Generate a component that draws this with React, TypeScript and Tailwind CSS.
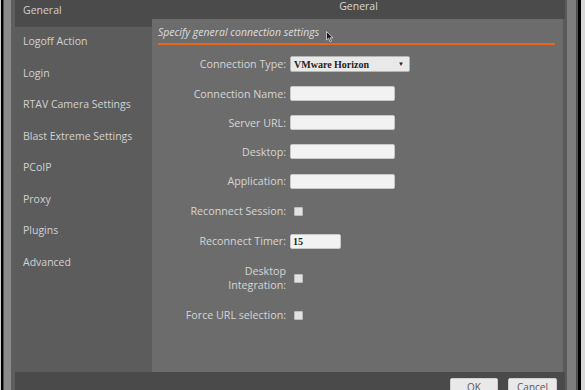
import React from "react";

const sidebarItems = [
  "General",
  "Logoff Action",
  "Login",
  "RTAV Camera Settings",
  "Blast Extreme Settings",
  "PCoIP",
  "Proxy",
  "Plugins",
  "Advanced",
];

function Label({ children }: { children: React.ReactNode }) {
  return (
    <div className="w-[134px] shrink-0 text-right text-[10.7px] leading-[14px] text-[#d6d6d6]">
      {children}
    </div>
  );
}

function TextBox({ w, value }: { w: string; value?: string }) {
  return (
    <div
      className={`${w} h-[15px] bg-[#f2f2f2] border border-[#c8c8c8] rounded-[2px] flex items-center pl-[2px] text-[10px] font-bold text-[#222]`}
      style={{ fontFamily: '"Liberation Serif", serif' }}
    >
      {value}
    </div>
  );
}

function Check() {
  return <div className="ml-[4px] w-[9px] h-[9px] bg-[#e2e2e2] rounded-[1px] border border-[#bdbdbd]" />;
}

export default function App() {
  return (
    <div
      className="w-[585px] h-[390px] flex overflow-hidden bg-[#888]"
      style={{ fontFamily: '"Open Sans", sans-serif' }}
    >
      {/* left frame */}
      <div className="w-[1px] bg-[#cfcfcf]" />
      <div className="w-[2px] bg-black" />
      <div className="w-[1px] bg-[#4e4e4e]" />
      <div className="w-[7px] bg-[#8a8a8a]" />
      <div className="w-[4px] bg-[#5e5e5e]" />

      {/* main */}
      <div className="w-[550px] flex flex-col">
        <div className="flex flex-1 min-h-0">
          {/* sidebar */}
          <div className="w-[137px] bg-[#5c5c5c] overflow-hidden">
            <div className="-mt-[5px]">
              {sidebarItems.map((it, i) => (
                <div
                  key={it}
                  className={`h-[31.5px] flex items-center pl-[8px] text-[10.5px] text-[#d2d2d2] ${
                    i === 0 ? "bg-[#4b4b4b]" : ""
                  }`}
                >
                  {it}
                </div>
              ))}
            </div>
          </div>

          {/* right column */}
          <div className="flex-1 flex flex-col">
            <div className="h-[19px] bg-[#4b4b4b] flex items-center justify-center text-[10.5px] text-[#d8d8d8] pb-[6px]">
              General
            </div>
            <div className="relative flex-1 bg-[#6c6c6c] border-r-2 border-[#5a5a5a] flex flex-col">
              <div className="h-[24px] pl-[6px] pt-[6px] text-[10.5px] italic text-[#dedede] leading-[14px]">
                Specify general connection settings
              </div>
              <div className="ml-[6px] mr-[8px] h-[2px] bg-[#e8671c]" />
              <div className="mt-[4px] flex flex-col">
                <div className="h-[30px] flex items-center gap-[4px]">
                  <Label>Connection Type:</Label>
                  <div className="w-[120px] h-[16px] bg-[#e9e9e9] border border-[#b5b5b5] rounded-[2px] flex items-center justify-between pl-[3px] pr-[5px]">
                    <span
                      className="text-[10px] font-bold text-[#1e1e1e]"
                      style={{ fontFamily: '"Liberation Serif", serif' }}
                    >
                      VMware Horizon
                    </span>
                    <span className="text-[6px] text-[#222]">▼</span>
                  </div>
                </div>
                <div className="h-[29px] flex items-center gap-[4px]">
                  <Label>Connection Name:</Label>
                  <TextBox w="w-[105px]" />
                </div>
                <div className="h-[29px] flex items-center gap-[4px]">
                  <Label>Server URL:</Label>
                  <TextBox w="w-[105px]" />
                </div>
                <div className="h-[29px] flex items-center gap-[4px]">
                  <Label>Desktop:</Label>
                  <TextBox w="w-[105px]" />
                </div>
                <div className="h-[30px] flex items-center gap-[4px]">
                  <Label>Application:</Label>
                  <TextBox w="w-[105px]" />
                </div>
                <div className="h-[30px] flex items-center gap-[4px]">
                  <Label>Reconnect Session:</Label>
                  <Check />
                </div>
                <div className="h-[30px] flex items-center gap-[4px]">
                  <Label>Reconnect Timer:</Label>
                  <TextBox w="w-[51px]" value="15" />
                </div>
                <div className="h-[44px] flex items-center gap-[4px]">
                  <Label>
                    Desktop
                    <br />
                    Integration:
                  </Label>
                  <Check />
                </div>
                <div className="h-[30px] flex items-center gap-[4px]">
                  <Label>Force URL selection:</Label>
                  <Check />
                </div>
              </div>
              {/* mouse cursor */}
              <svg
                className="absolute left-[174px] top-[12px]"
                width="8"
                height="12"
                viewBox="0 0 8 12"
              >
                <path d="M0.5 0.5 L0.5 9 L2.6 7.2 L4 10.8 L5.4 10.2 L4 6.8 L7 6.8 Z" fill="#1a1a1a" stroke="#ddd" strokeWidth="0.8" />
              </svg>
            </div>
          </div>
        </div>
        {/* bottom bar */}
        <div className="h-[18px] bg-[#4a4a4a] flex justify-end items-start pt-[6px] pr-[8px] gap-[10px]">
          <div className="w-[48px] h-[16px] bg-[#e9e9e9] border border-[#cfcfcf] rounded-[2px] flex justify-center text-[10px] text-[#555] leading-[16px]">
            OK
          </div>
          <div className="w-[49px] h-[16px] bg-[#e9e9e9] border border-[#cfcfcf] rounded-[2px] flex justify-center text-[10px] text-[#555] leading-[16px]">
            Cancel
          </div>
        </div>
      </div>

      {/* right frame */}
      <div className="w-[2px] bg-[#5a5a5a]" />
      <div className="w-[9px] bg-[#7d7d7d]" />
      <div className="w-[2px] bg-[#4e4e4e]" />
      <div className="w-[3px] bg-black" />
      <div className="w-[4px] bg-[#d8d8d8]" />
    </div>
  );
}
